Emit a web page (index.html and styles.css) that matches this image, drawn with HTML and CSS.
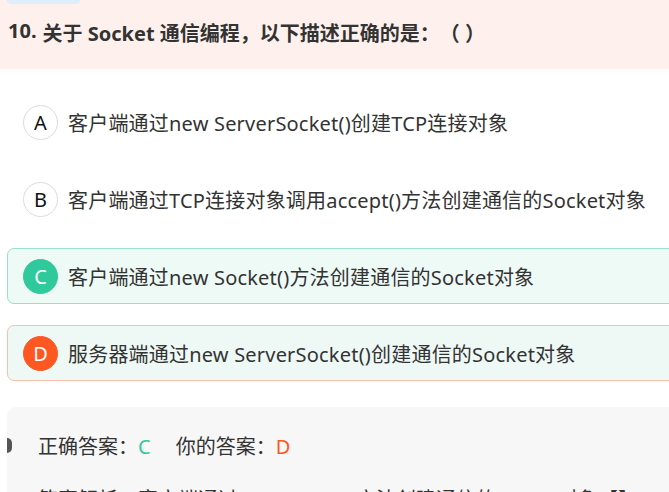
FILE: index.html
```html
<!DOCTYPE html>
<html lang="zh-CN">
<head>
<meta charset="utf-8">
<link rel="stylesheet" href="styles.css">
</head>
<body>
<div class="page">
  <header class="q-head">
    <div class="tab-stub"></div>
    <div class="q-title">
      <span class="q-num">10.</span>
      <span class="q-text">关于 Socket 通信编程，以下描述正确的是：（ ）</span>
    </div>
  </header>
  <div class="options">
    <div class="option">
      <span class="letter">A</span>
      <span class="opt-text">客户端通过new ServerSocket()创建TCP连接对象</span>
    </div>
    <div class="option">
      <span class="letter">B</span>
      <span class="opt-text">客户端通过TCP连接对象调用accept()方法创建通信的Socket对象</span>
    </div>
    <div class="option option-right">
      <span class="letter">C</span>
      <span class="opt-text">客户端通过new Socket()方法创建通信的Socket对象</span>
    </div>
    <div class="option option-wrong">
      <span class="letter">D</span>
      <span class="opt-text">服务器端通过new ServerSocket()创建通信的Socket对象</span>
    </div>
  </div>
  <div class="answer">
    <div class="answer-line">
      <span>正确答案：</span><span class="ans-right">C</span>
      <span class="your">你的答案：</span><span class="ans-wrong">D</span>
    </div>
    <div class="analysis">答案解析：客户端通过new Socket()方法创建通信的Socket对象【】</div>
  </div>
</div>
</body>
</html>
```
FILE: styles.css
```css
html, body {
  margin: 0;
  padding: 0;
  background: #fff;
}
body {
  font-family: "Noto Sans", "Noto Sans CJK SC", sans-serif;
  color: #333;
  text-spacing-trim: space-all;
}
.page {
  width: 669px;
  height: 492px;
  overflow: hidden;
}
.q-head {
  background: #fef1ed;
  height: 69px;
  padding-left: 7px;
  box-sizing: border-box;
}
.tab-stub {
  width: 73px;
  height: 4px;
  background: #dfeefc;
  border-radius: 0 0 6px 6px;
}
.q-title {
  display: flex;
  align-items: baseline;
  gap: 6px;
  padding-top: 15px;
  margin-left: 1px;
  font-size: 20px;
  font-weight: bold;
  line-height: 30px;
  white-space: nowrap;
}
.q-num {
  position: relative;
  top: -3px;
}
.q-text {
  text-spacing-trim: space-all;
}
.options {
  display: flex;
  flex-direction: column;
  gap: 21px;
  margin: 25px -40px 0 7px;
}
.option {
  display: flex;
  align-items: center;
  height: 56px;
  box-sizing: border-box;
  border: 1px solid transparent;
  border-radius: 7px;
  padding-left: 15px;
  font-size: 20px;
  white-space: nowrap;
}
.opt-text {
  letter-spacing: 0.2px;
}
.letter {
  width: 35px;
  height: 35px;
  box-sizing: border-box;
  border: 1px solid #dcdcdc;
  border-radius: 50%;
  display: flex;
  align-items: center;
  justify-content: center;
  font-size: 20px;
  color: #111;
  flex: none;
  margin-right: 10px;
}
.option-right {
  background: #eefaf6;
  border-color: #96e2c8;
}
.option-right .letter {
  background: #2fc99b;
  border-color: #2fc99b;
  color: #fff;
}
.option-wrong {
  background: #eef9f6;
  border-color: #f6c0ab;
}
.option-wrong .letter {
  background: #ff5722;
  border-color: #ff5722;
  color: #fff;
}
.answer {
  position: relative;
  margin: 26px -40px 0 7px;
  background: #f7f7f7;
  border-radius: 9px 0 0 0;
  padding: 26px 0 0 31px;
  height: 120px;
}
.answer::before {
  content: "";
  position: absolute;
  left: 0;
  top: 31px;
  width: 5px;
  height: 15px;
  background: #555;
  border-radius: 0 8px 8px 0;
}
.answer-line {
  font-size: 20px;
  line-height: 28px;
  white-space: nowrap;
}
.ans-right {
  color: #2fc99b;
}
.ans-wrong {
  color: #ff5722;
}
.your {
  margin-left: 20px;
}
.analysis {
  margin-top: 25px;
  font-size: 20px;
  line-height: 28px;
  white-space: nowrap;
}
```
